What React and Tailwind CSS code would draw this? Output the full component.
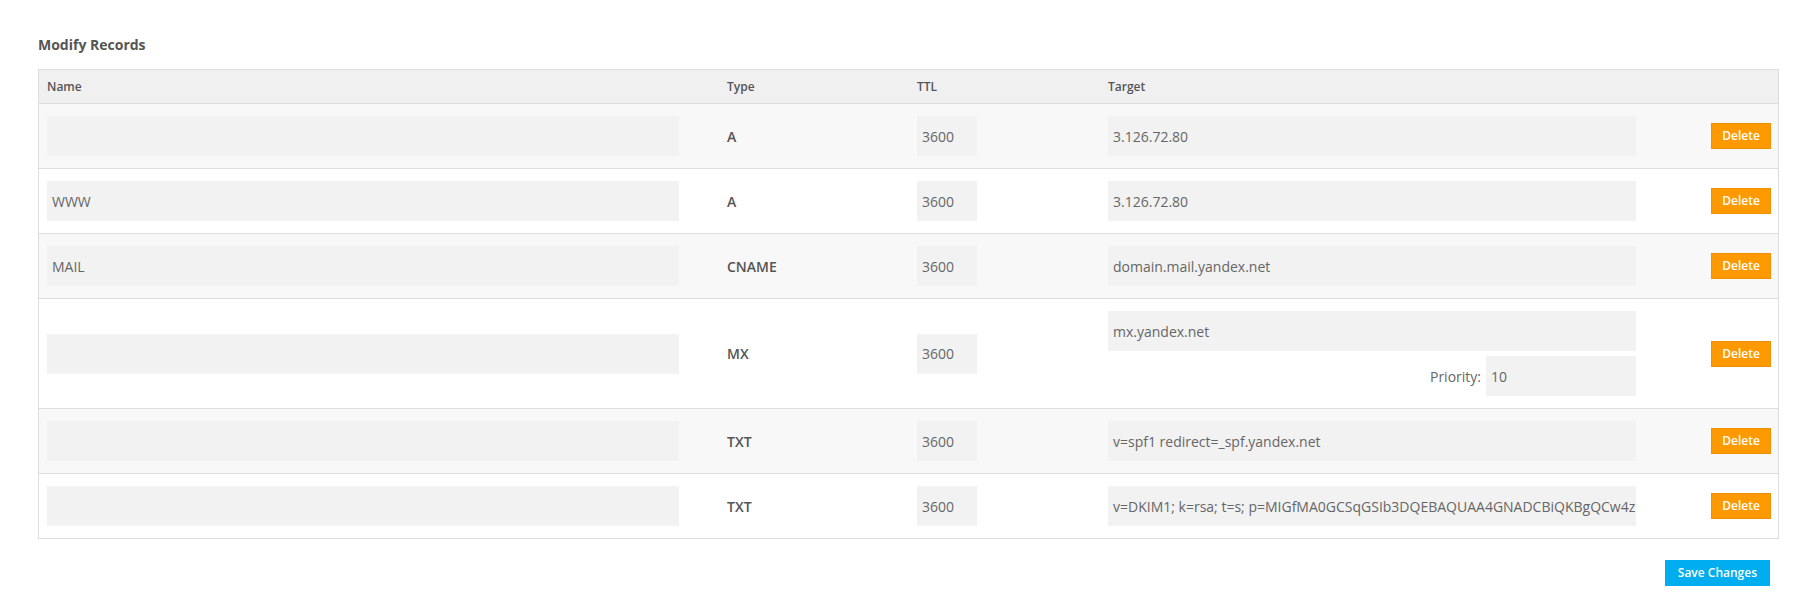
import React from 'react'

const ROWS = [
  { name: '', type: 'A', ttl: '3600', target: '3.126.72.80' },
  { name: 'WWW', type: 'A', ttl: '3600', target: '3.126.72.80' },
  { name: 'MAIL', type: 'CNAME', ttl: '3600', target: 'domain.mail.yandex.net' },
  { name: '', type: 'MX', ttl: '3600', target: 'mx.yandex.net', priority: '10' },
  { name: '', type: 'TXT', ttl: '3600', target: 'v=spf1 redirect=_spf.yandex.net' },
  { name: '', type: 'TXT', ttl: '3600', target: 'v=DKIM1; k=rsa; t=s; p=MIGfMA0GCSqGSIb3DQEBAQUAA4GNADCBiQKBgQCw4z' },
]

const GRID = 'grid grid-cols-[680px_190px_191px_1fr_80px] items-center'

function Field({ value, className = '' }) {
  return (
    <div className={`h-10 bg-[#f2f2f2] px-[5px] flex items-center text-[14px] text-[#666] whitespace-nowrap overflow-hidden ${className}`}>
      {value}
    </div>
  )
}

export default function App() {
  return (
    <div className="min-h-[599px] bg-white pl-[38px] pr-[30px] pt-[35px] font-['Open_Sans',sans-serif] text-[#555]">
      <h3 className="text-[14px] font-bold leading-5 text-[#555]">Modify Records</h3>

      <div className="mt-[14px] border border-[#dddddd]">
        <div className={`${GRID} h-[34px] bg-[#f0f0f0] border-b border-[#dddddd] text-[12px] font-semibold text-[#555]`}>
          <div className="px-2">Name</div>
          <div className="px-2">Type</div>
          <div className="px-2">TTL</div>
          <div className="px-2">Target</div>
          <div />
        </div>

        {ROWS.map((r, i) => (
          <div
            key={i}
            className={`${GRID} py-3 border-b border-[#dddddd] last:border-0 ${i % 2 === 0 ? 'bg-[#f8f8f8]' : 'bg-white'}`}
          >
            <div className="px-2"><Field value={r.name} className="w-[632px]" /></div>
            <div className="px-2 text-[14px] font-semibold text-[#555]">{r.type}</div>
            <div className="px-2"><Field value={r.ttl} className="w-[60px]" /></div>
            <div className="px-2">
              <Field value={r.target} className="w-[528px]" />
              {r.priority && (
                <div className="mt-[5px] flex items-center justify-end w-[528px] gap-[5px]">
                  <span className="text-[14px] text-[#666]">Priority:</span>
                  <Field value={r.priority} className="w-[150px]" />
                </div>
              )}
            </div>
            <div className="flex justify-end pr-[7px]">
              <button className="w-[60px] h-[26px] bg-[#ff9900] border border-[#f29100] text-white text-[12px] font-semibold">
                Delete
              </button>
            </div>
          </div>
        ))}
      </div>

      <div className="flex justify-end pr-[9px] mt-[21px]">
        <button className="h-[26px] px-[13px] bg-[#00aeef] text-white text-[12px] font-semibold">Save Changes</button>
      </div>

      <h3 className="mt-[9px] text-[14px] font-bold leading-5 text-[#555]">Add Records</h3>
    </div>
  )
}
